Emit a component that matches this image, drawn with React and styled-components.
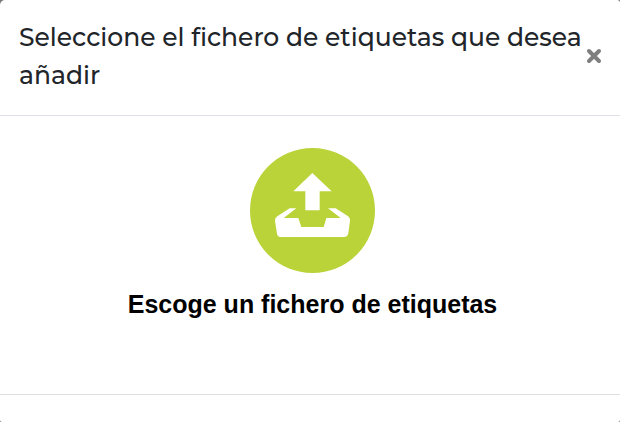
import React from "react";
import styled, { createGlobalStyle } from "styled-components";

const GlobalStyle = createGlobalStyle`
  *, *::before, *::after { box-sizing: border-box; }
  body { margin: 0; background: #777; }
`;

const Dialog = styled.section`
  display: flex;
  flex-direction: column;
  min-height: 100vh;
  background: #fff;
  border-radius: 5px 3px 2px 2px;
  overflow: hidden;
`;

const Header = styled.header`
  display: flex;
  align-items: center;
  justify-content: space-between;
  padding: 18px 17px 21px 19px;
  border-bottom: 1px solid #dee2e6;
`;

const Title = styled.h1`
  flex: 1;
  margin: 0;
  font: 500 25px/38px Montserrat, Inter, "Liberation Sans", sans-serif;
  color: #212529;
`;

const CloseButton = styled.button`
  display: flex;
  flex: none;
  padding: 1px;
  border: 0;
  background: none;
  color: #7f7f7f;
  cursor: pointer;
`;

const Body = styled.main`
  flex: 1;
  display: flex;
  flex-direction: column;
  align-items: center;
  padding: 32px 16px 16px 21px;
`;

const FileButton = styled.button`
  display: flex;
  flex-direction: column;
  align-items: center;
  gap: 15px;
  padding: 0;
  border: 0;
  background: none;
  color: #000;
  font: 700 25px/32px "Liberation Sans", Arial, sans-serif;
  cursor: pointer;
`;

const Footer = styled.footer`
  height: 28px;
  border-top: 1px solid #dfdfe3;
`;

function UploadIcon() {
  return (
    <svg width="125" height="125" viewBox="0 0 375 375" aria-hidden="true">
      <circle cx="187.5" cy="187.5" r="187.5" fill="#bad339" />
      <g fill="#fff">
        <path d="M187 75 245 130H209V187H166V130H130Z" />
        <path d="M119 181H139L101 210H145L154 237H221L229 210H272L234 181H257L292 203Q301 209 300 218L295 256Q293 267 282 267H93Q83 267 81 257L75 218Q74 210 82 205Z" />
      </g>
    </svg>
  );
}

function CloseIcon() {
  return (
    <svg width="16" height="16" viewBox="0 0 16 16" aria-hidden="true">
      <path
        d="M3 3 13 13M13 3 3 13"
        stroke="currentColor"
        strokeWidth="4"
        strokeLinecap="round"
      />
    </svg>
  );
}

export default function App() {
  return (
    <>
      <GlobalStyle />
      <Dialog role="dialog" aria-labelledby="dialog-title">
        <Header>
          <Title id="dialog-title">
            Seleccione el fichero de etiquetas que desea añadir
          </Title>
          <CloseButton type="button" aria-label="Cerrar">
            <CloseIcon />
          </CloseButton>
        </Header>
        <Body>
          <FileButton type="button">
            <UploadIcon />
            <span>Escoge un fichero de etiquetas</span>
          </FileButton>
        </Body>
        <Footer />
      </Dialog>
    </>
  );
}
